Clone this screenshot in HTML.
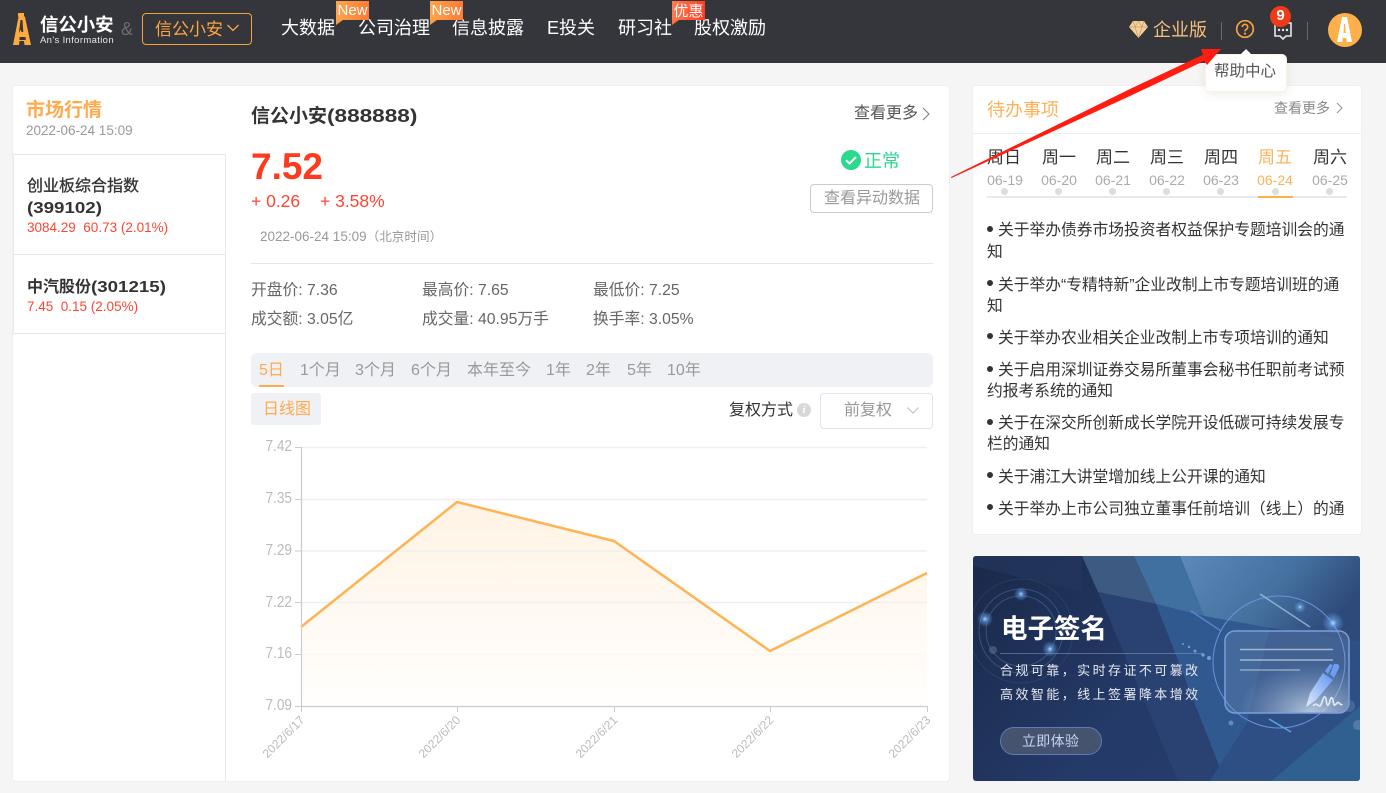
<!DOCTYPE html>
<html lang="zh-CN">
<head>
<meta charset="utf-8">
<title>信公小安</title>
<style>
*{box-sizing:border-box;margin:0;padding:0}
html,body{width:1386px;height:793px;overflow:hidden;background:#f5f5f5}
body{position:relative;font-family:"Liberation Sans","Noto Sans CJK SC",sans-serif;color:#333}
.t{position:absolute;white-space:nowrap;line-height:20px}
.b{position:absolute}
.hd{position:absolute;left:0;top:0;width:1386px;height:63px;background:#34363b}
.nav{color:#fff;font-size:18px;top:18px}
.tag{position:absolute;top:1px;width:33px;height:19px;color:#fff;font-size:15px;line-height:19px;text-align:center;background:linear-gradient(90deg,#ffa64d,#ff7a35)}
.tag:after{content:"";position:absolute;left:0;top:19px;border-top:5px solid #ff9a48;border-right:7px solid transparent}
.tag.r{background:linear-gradient(90deg,#ff7b50,#ff3d20);line-height:21px}
.tag.r:after{border-top-color:#ff6e48}
.red{color:#ff4433}
.st{font-size:15.75px;color:#666}
.tab{font-size:16px;color:#999;top:361px}
.yl{font-size:15.5px;color:#bbb;width:40px;text-align:right;left:252px;transform-origin:right center;transform:scaleX(.88)}
.xl{font-size:12px;color:#bbb;transform:rotate(-45deg);transform-origin:right center;line-height:14px}
.wk{font-size:17px;color:#333;width:54px;text-align:center;top:148px}
.dt{font-size:14px;color:#aaa;width:54px;text-align:center;top:170px}
.dot{position:absolute;top:188px;width:7px;height:7px;border-radius:50%;background:#ddd}
.li{font-size:15.75px;color:#333;left:998px;line-height:22px}
.bu{position:absolute;left:987px;width:6px;height:6px;border-radius:50%;background:#333}
.sx{display:inline-block;transform:scaleX(1.17);transform-origin:left center}
</style>
</head>
<body>

<!-- header -->
<div class="hd"></div>
<svg class="b" style="left:12px;top:12px" width="22" height="34" viewBox="0 0 22 34">
  <path d="M6 1h6v3l1 1 6 28H12.500l-.5-4H7.500L7 33H1L6.500 5 6 4z" fill="#ffaa3f"/>
  <path d="M8.500 8h2l.8 12H9.500l-.5-2-1 .8-.6 1.700H7z" fill="#34363b"/>
  <path d="M7.500 25h6l.3 3H7.500z" fill="#34363b"/>
</svg>
<div class="t" style="left:40px;top:15px;font-size:18.400px;font-weight:700;color:#fff;">信公小安</div>
<div class="t" style="left:40px;top:31px;font-size:9.500px;color:#e8e8e8;letter-spacing:.35px">An's Information</div>
<div class="t" style="left:121px;top:19px;font-size:18px;color:#6c6e72">&amp;</div>
<div class="b" style="left:142px;top:13px;width:110px;height:32px;border:1px solid #f2a33a;border-radius:4px"></div>
<div class="t" style="left:155px;top:20px;font-size:17px;color:#ffa640">信公小安</div>
<svg class="b" style="left:226px;top:23px" width="14" height="10" viewBox="0 0 14 10"><path d="M1.500 2l5.500 5.500L12.500 2" fill="none" stroke="#ffa640" stroke-width="1.300"/></svg>

<div class="t nav" style="left:281px">大数据</div>
<div class="t nav" style="left:358px">公司治理</div>
<div class="t nav" style="left:452px">信息披露</div>
<div class="t nav" style="left:547px">E投关</div>
<div class="t nav" style="left:618px">研习社</div>
<div class="t nav" style="left:694px">股权激励</div>
<div class="tag" style="left:336px">New</div>
<div class="tag" style="left:430px">New</div>
<div class="tag r" style="left:672px">优惠</div>

<svg class="b" style="left:1128px;top:20px" width="21" height="19" viewBox="0 0 21 19">
  <path d="M5 1h11l4 6-9.500 11L1 7z" fill="#f6cf9a"/>
  <path d="M1 7h19M7 7l3.500 11L14 7M5 1l2 6 3.500-6 3.500 6 2-6" fill="none" stroke="#b08a5c" stroke-width=".5"/>
</svg>
<div class="t" style="left:1153px;top:20px;font-size:18px;color:#f6bd7b">企业版</div>
<div class="b" style="left:1221px;top:22px;width:1px;height:18px;background:#66686c"></div>
<svg class="b" style="left:1235px;top:19px" width="20" height="20" viewBox="0 0 20 20">
  <circle cx="10" cy="10" r="8.300" fill="none" stroke="#f6a23d" stroke-width="1.700"/>
  <path d="M7.300 8a2.700 2.700 0 1 1 4.100 2.300c-1 .6-1.400 1-1.400 2.100" fill="none" stroke="#f6a23d" stroke-width="1.600"/>
  <circle cx="10" cy="14.600" r="1.100" fill="#f6a23d"/>
</svg>
<svg class="b" style="left:1272px;top:20px" width="22" height="20" viewBox="0 0 22 20">
  <path d="M3 3h16v13h-5l-3 3-3-3H3z" fill="none" stroke="#e8e8e8" stroke-width="1.600"/>
  <circle cx="7" cy="10" r="1.200" fill="#e8e8e8"/><circle cx="11" cy="10" r="1.200" fill="#e8e8e8"/><circle cx="15" cy="10" r="1.200" fill="#e8e8e8"/>
</svg>
<div class="b" style="left:1270px;top:6px;width:21px;height:21px;border-radius:50%;background:#f03a17;color:#fff;text-align:center;font-size:15px;font-weight:700;line-height:20px">9</div>
<div class="b" style="left:1307px;top:22px;width:1px;height:18px;background:#66686c"></div>
<svg class="b" style="left:1328px;top:13px" width="34" height="34" viewBox="0 0 34 34">
  <circle cx="17" cy="17" r="17" fill="#ffb04a"/>
  <path d="M14 4h5l5 25H9z" fill="#fff"/>
  <path d="M16 11h1.200l.5 9h-2.200z" fill="#ffb04a"/>
  <path d="M14.500 25h4v4h-4z" fill="#ffb04a"/>
</svg>

<!-- left main card -->
<div class="b" style="left:12px;top:85px;width:938px;height:697px;background:#fff;border:1px solid #f0f0f4;border-radius:4px"></div>
<div class="t" style="left:26px;top:101px;font-size:19px;font-weight:700;color:#ffaa4d">市场行情</div>
<div class="t" style="left:26px;top:121px;font-size:13.500px;color:#999">2022-06-24 15:09</div>
<div class="b" style="left:13px;top:154px;width:213px;height:1px;background:#e6e6e6"></div>
<div class="b" style="left:13px;top:254px;width:213px;height:1px;background:#e6e6e6"></div>
<div class="b" style="left:13px;top:333px;width:213px;height:1px;background:#e6e6e6"></div>
<div class="b" style="left:225px;top:154px;width:1px;height:627px;background:#e9e9e9"></div>
<div class="b" style="left:13px;top:154px;width:1px;height:180px;background:#e9e9e9"></div>

<div class="t" style="left:27px;top:177px;font-size:16px;color:#333;-webkit-text-stroke:.3px #333">创业板综合指数</div>
<div class="t" style="left:27px;top:199px;font-size:16px;font-weight:700;color:#333"><span class="sx">(399102)</span></div>
<div class="t red" style="left:27px;top:218px;font-size:13.500px">3084.29&nbsp; 60.73 (2.01%)</div>
<div class="t" style="left:27px;top:278px;font-size:16px;font-weight:700;color:#333">中汽股份<span class="sx">(301215)</span></div>
<div class="t red" style="left:27px;top:297px;font-size:13.500px">7.45&nbsp; 0.15 (2.05%)</div>

<div class="t" style="left:251px;top:106px;font-size:19px;font-weight:700;color:#333">信公小安<span class="sx" style="font-size:18.500px;transform:scaleX(1.22)">(888888)</span></div>
<div class="t" style="left:854px;top:104px;font-size:16px;color:#555">查看更多</div>
<svg class="b" style="left:921px;top:107px" width="10" height="14" viewBox="0 0 10 14"><path d="M2 1l6 6-6 6" fill="none" stroke="#888" stroke-width="1.200"/></svg>
<div class="t" style="left:251px;top:147px;font-size:37px;font-weight:700;color:#ff3b1f;line-height:40px">7.52</div>
<div class="t red" style="left:251px;top:191px;font-size:17.500px">+ 0.26</div>
<div class="t red" style="left:320px;top:191px;font-size:17.500px">+ 3.58%</div>
<div class="t" style="left:260px;top:227px;font-size:13.500px;color:#999">2022-06-24 15:09<span style="font-size:12.600px">（北京时间）</span></div>
<svg class="b" style="left:841px;top:150px" width="20" height="20" viewBox="0 0 20 20"><circle cx="10" cy="10" r="10" fill="#2bd98c"/><path d="M5 10.300l3.500 3.200L15 7" fill="none" stroke="#fff" stroke-width="2"/></svg>
<div class="t" style="left:864px;top:151px;font-size:18px;color:#2bd98c">正常</div>
<div class="b" style="left:810px;top:184px;width:123px;height:29px;border:1px solid #ccc;border-radius:4px"></div>
<div class="t" style="left:824px;top:189px;font-size:16px;color:#999">查看异动数据</div>
<div class="b" style="left:251px;top:263px;width:682px;height:1px;background:#e6e6e6"></div>

<div class="t st" style="left:251px;top:281px">开盘价: 7.36</div>
<div class="t st" style="left:422px;top:281px">最高价: 7.65</div>
<div class="t st" style="left:593px;top:281px">最低价: 7.25</div>
<div class="t st" style="left:251px;top:310px">成交额: 3.05亿</div>
<div class="t st" style="left:422px;top:310px">成交量: 40.95万手</div>
<div class="t st" style="left:593px;top:310px">换手率: 3.05%</div>

<div class="b" style="left:251px;top:353px;width:682px;height:34px;background:#f0f1f5;border-radius:6px"></div>
<div class="t tab" style="left:259px;color:#ffaa4d">5日</div>
<div class="b" style="left:259px;top:385px;width:25px;height:2px;background:#ffaa4d"></div>
<div class="t tab" style="left:300px">1个月</div>
<div class="t tab" style="left:355px">3个月</div>
<div class="t tab" style="left:411px">6个月</div>
<div class="t tab" style="left:467px">本年至今</div>
<div class="t tab" style="left:546px">1年</div>
<div class="t tab" style="left:586px">2年</div>
<div class="t tab" style="left:627px">5年</div>
<div class="t tab" style="left:667px">10年</div>

<div class="b" style="left:251px;top:393px;width:70px;height:32px;background:#f0f1f5;border-radius:3px"></div>
<div class="t" style="left:263px;top:400px;font-size:16px;color:#ffaa4d">日线图</div>
<div class="t" style="left:729px;top:401px;font-size:16px;color:#333">复权方式</div>
<div class="b" style="left:797px;top:403px;width:14px;height:14px;border-radius:50%;background:#d8d8d8;color:#fff;font:italic 700 11px/14px 'Liberation Serif',serif;text-align:center">i</div>
<div class="b" style="left:820px;top:393px;width:113px;height:36px;border:1px solid #e2e3ea;border-radius:4px"></div>
<div class="t" style="left:844px;top:401px;font-size:16px;color:#999">前复权</div>
<svg class="b" style="left:906px;top:406px" width="14" height="10" viewBox="0 0 14 10"><path d="M1.500 1.500L7 7l5.500-5.500" fill="none" stroke="#c4c4c4" stroke-width="1.200"/></svg>

<!-- chart -->
<svg class="b" style="left:250px;top:436px" width="690" height="344" viewBox="250 436 690 344">
  <defs>
    <linearGradient id="ar" x1="0" y1="502" x2="0" y2="706" gradientUnits="userSpaceOnUse">
      <stop offset="0" stop-color="#ffb04a" stop-opacity=".15"/>
      <stop offset="1" stop-color="#ffb04a" stop-opacity=".01"/>
    </linearGradient>
  </defs>
  <path d="M301 627L457 502L614 541L770 651L927 573V706H301Z" fill="url(#ar)"/>
  <g stroke="#efefef" stroke-width="1.500">
    <path d="M301 447.500H927M301 499.500H927M301 551H927M301 602.500H927"/>
  </g>
  <path d="M301 654.500H927" stroke="#fbf6f0" stroke-width="1.500"/>
  <path d="M301 627L457 502L614 541L770 651L927 573" fill="none" stroke="#ffb353" stroke-width="2.500" stroke-linejoin="round"/>
  <path d="M301.500 447V706.500H927.500" fill="none" stroke="#ccc" stroke-width="1.200"/>
  <path d="M295 447.500h6M295 499.500h6M295 551h6M295 602.500h6M295 654.500h6M295 706.500h6M301.500 706v6M457.500 706v6M614.500 706v6M770.500 706v6M927.500 706v6" stroke="#ccc" stroke-width="1"/>
</svg>
<div class="t yl" style="top:437px">7.42</div>
<div class="t yl" style="top:489px">7.35</div>
<div class="t yl" style="top:541px">7.29</div>
<div class="t yl" style="top:593px">7.22</div>
<div class="t yl" style="top:644px">7.16</div>
<div class="t yl" style="top:696px">7.09</div>
<div class="t xl" style="right:1084px;top:711px">2022/6/17</div>
<div class="t xl" style="right:928px;top:711px">2022/6/20</div>
<div class="t xl" style="right:771px;top:711px">2022/6/21</div>
<div class="t xl" style="right:615px;top:711px">2022/6/22</div>
<div class="t xl" style="right:458px;top:711px">2022/6/23</div>

<!-- right todo card -->
<div class="b" style="left:972px;top:85px;width:390px;height:450px;background:#fff;border:1px solid #f0f0f4;border-radius:4px"></div>
<div class="b" style="left:973px;top:133px;width:388px;height:1px;background:#eceef5"></div>
<div class="t" style="left:987px;top:100px;font-size:18px;color:#ffb05a">待办事项</div>
<div class="t" style="left:1274px;top:98px;font-size:14px;color:#888">查看更多</div>
<svg class="b" style="left:1335px;top:102px" width="9" height="12" viewBox="0 0 9 12"><path d="M2 1l5 5-5 5" fill="none" stroke="#999" stroke-width="1.100"/></svg>

<div class="t wk" style="left:977px">周日</div>
<div class="t wk" style="left:1032px">周一</div>
<div class="t wk" style="left:1086px">周二</div>
<div class="t wk" style="left:1140px">周三</div>
<div class="t wk" style="left:1194px">周四</div>
<div class="t wk" style="left:1248px;color:#ffb05a">周五</div>
<div class="t wk" style="left:1303px">周六</div>
<div class="t dt" style="left:978px">06-19</div>
<div class="t dt" style="left:1032px">06-20</div>
<div class="t dt" style="left:1086px">06-21</div>
<div class="t dt" style="left:1140px">06-22</div>
<div class="t dt" style="left:1194px">06-23</div>
<div class="t dt" style="left:1248px;color:#ffb05a">06-24</div>
<div class="t dt" style="left:1303px">06-25</div>
<div class="b" style="left:987px;top:196px;width:360px;height:2px;background:#e8e8ee"></div>
<div class="b" style="left:1258px;top:196px;width:35px;height:2px;background:#ffb04a"></div>
<div class="dot" style="left:1001px"></div>
<div class="dot" style="left:1055px"></div>
<div class="dot" style="left:1109px"></div>
<div class="dot" style="left:1163px"></div>
<div class="dot" style="left:1217px"></div>
<div class="dot" style="left:1272px"></div>
<div class="dot" style="left:1326px"></div>

<div class="bu" style="top:226px"></div>
<div class="t li" style="top:220px">关于举办债券市场投资者权益保护专题培训会的通</div>
<div class="t li" style="left:987px;top:242px">知</div>
<div class="bu" style="top:280px"></div>
<div class="t li" style="top:275px">关于举办“专精特新”企业改制上市专题培训班的通</div>
<div class="t li" style="left:987px;top:296px">知</div>
<div class="bu" style="top:333px"></div>
<div class="t li" style="top:328px">关于举办农业相关企业改制上市专项培训的通知</div>
<div class="bu" style="top:366px"></div>
<div class="t li" style="top:360px">关于启用深圳证券交易所董事会秘书任职前考试预</div>
<div class="t li" style="left:987px;top:381px">约报考系统的通知</div>
<div class="bu" style="top:419px"></div>
<div class="t li" style="top:413px">关于在深交所创新成长学院开设低碳可持续发展专</div>
<div class="t li" style="left:987px;top:434px">栏的通知</div>
<div class="bu" style="top:472px"></div>
<div class="t li" style="top:467px">关于浦江大讲堂增加线上公开课的通知</div>
<div class="bu" style="top:504px"></div>
<div class="t li" style="top:499px">关于举办上市公司独立董事任前培训（线上）的通</div>

<!-- banner -->
<svg class="b" style="left:973px;top:556px;border-radius:3px" width="387" height="225" viewBox="0 0 387 225">
  <defs>
    <linearGradient id="bg" x1="0" y1="0" x2="1" y2=".5">
      <stop offset="0" stop-color="#1a2949"/><stop offset=".6" stop-color="#243a68"/><stop offset="1" stop-color="#263c6c"/>
    </linearGradient>
    <linearGradient id="s1" x1="0" y1="0" x2="1" y2=".4">
      <stop offset="0" stop-color="#5d89ba"/><stop offset=".6" stop-color="#44709f"/><stop offset="1" stop-color="#2e4a7a"/>
    </linearGradient>
    <radialGradient id="gl"><stop offset="0" stop-color="#b9dcff"/><stop offset=".35" stop-color="#6aa6f0" stop-opacity=".6"/><stop offset="1" stop-color="#6aa6f0" stop-opacity="0"/></radialGradient>
    <radialGradient id="wh" cx=".7" cy="1" r=".6"><stop offset="0" stop-color="#cfdcee" stop-opacity=".85"/><stop offset="1" stop-color="#7f9cc4" stop-opacity=".25"/></radialGradient>
    <linearGradient id="pn" x1="1" y1="0" x2="0" y2="1"><stop offset="0" stop-color="#5e95f5"/><stop offset="1" stop-color="#e2ecfb"/></linearGradient>
  </defs>
  <rect width="387" height="225" fill="url(#bg)"/>
  <path d="M0 10L109 36V0H0Z" fill="#24365c" opacity=".7"/>
  <path d="M109 0H161L183 48L125 36Z" fill="#3d5a82"/>
  <path d="M125 36L183 48L252 225H205Z" fill="#2a4272"/>
  <path d="M183 48L231 60L297 72L274 167L237 225H252Z" fill="#30598f"/>
  <path d="M161 0H207L231 60L183 48Z" fill="#40709f"/>
  <path d="M207 0H387V85L297 72L231 60Z" fill="url(#s1)"/>
  <path d="M297 72L387 85V150L298 225H237L274 167Z" fill="#2d4f84"/>
  <path d="M298 225L387 150V225Z" fill="#30608f"/>
  <g fill="none" stroke="#6c93d8" stroke-opacity=".35">
    <circle cx="48" cy="75" r="35"/><circle cx="48" cy="75" r="42"/><circle cx="48" cy="75" r="52" stroke-opacity=".15"/>
  </g>
  <circle cx="48" cy="38" r="7" fill="url(#gl)"/>
  <circle cx="12" cy="63" r="8" fill="url(#gl)"/>
  <circle cx="77" cy="93" r="8" fill="url(#gl)"/>
  <circle cx="20" cy="94" r="4" fill="#5a6c8c" opacity=".6"/>
  <path d="M27 97.500H230" stroke="#8c9cbc" stroke-opacity=".7" stroke-width=".8"/>
  <circle cx="306" cy="106" r="66" fill="none" stroke="#6f90e0" stroke-width="1"/>
  <path d="M287 38l50 33" stroke="#9fc0e0" stroke-opacity=".8" stroke-width="1.500"/>
  <path d="M218 55l30 20" stroke="#6f90e0" stroke-opacity=".7" stroke-width="1.500"/>
  <path d="M296 163l22 13" stroke="#58a6e8" stroke-width="1.500"/>
  <rect x="252" y="75" width="124" height="82" rx="10" fill="url(#wh)" stroke="#7d9ddc" stroke-width="1.500"/>
  <path d="M267 93.500h93M267 104h93" stroke="#c4d2e2" stroke-opacity=".75" stroke-width="1.500"/>
  <path d="M267 114h60" stroke="#c4d2e2" stroke-opacity=".6" stroke-width="1.500"/>
  <path d="M333 151L337 137L350 117L360 124L343 144Z" fill="url(#pn)"/>
  <path d="M352 115L357 108L360 109L355 118ZM357 118L361 108C365 107 367 109 366 112L361 122Z" fill="#6d9cf0"/>
  <path d="M340 150c3-4 5 0 7 0 2-1 3-10 5-9s1 9 3 8 2-9 4-7 1 8 3 7 2-4 4-2 3 2 3 1" fill="none" stroke="#dce8f8" stroke-width="1.700"/>
  <circle cx="360" cy="67" r="11" fill="url(#gl)"/>
  <circle cx="327" cy="51" r="6" fill="url(#gl)"/>
  <circle cx="258" cy="167" r="2.500" fill="#7f9cc4" opacity=".7"/>
  <circle cx="376" cy="150" r="6" fill="#7f9cc4" opacity=".3"/>
  <circle cx="385" cy="169" r="5" fill="#7f9cc4" opacity=".45"/>
  <g fill="#6f9be0"><circle cx="210" cy="88" r="1"/><circle cx="216" cy="91" r="1.200"/><circle cx="222" cy="95" r="1.500"/><circle cx="230" cy="99" r="1.700"/><circle cx="236" cy="102" r="2"/></g>
  <rect x="27.500" y="171.500" width="101" height="27" rx="13.500" fill="#45536f" stroke="#5f7ab8"/>
</svg>
<div class="t" style="left:1001px;top:614px;font-size:26.500px;font-weight:700;color:#fff;line-height:30px">电子签名</div>
<div class="t" style="left:1000px;top:661px;font-size:13px;color:#e6e8f0;letter-spacing:2.430px">合规可靠，实时存证不可篡改</div>
<div class="t" style="left:1000px;top:685px;font-size:13px;color:#e6e8f0;letter-spacing:2.430px">高效智能，线上签署降本增效</div>
<div class="t" style="left:1022px;top:731px;font-size:14px;color:#c5d6f2;letter-spacing:.3px">立即体验</div>

<!-- tooltip -->
<div class="b" style="left:1205px;top:54px;width:82px;height:38px;background:#fff;border:1px solid #fdf0dd;border-radius:5px;box-shadow:0 3px 10px rgba(0,0,0,.07)"></div>
<div class="b" style="left:1240px;top:49px;width:0;height:0;border-left:6px solid transparent;border-right:6px solid transparent;border-bottom:6px solid #fff"></div>
<div class="t" style="left:1214px;top:62px;font-size:15.500px;color:#555">帮助中心</div>

<!-- arrow -->
<svg class="b" style="left:945px;top:40px" width="285" height="145" viewBox="945 40 285 145">
  <path d="M951 177L1130 89L1203 54.700L1201 49L1221 49L1207 65L1204 61L1130 96L951.500 178Z" fill="#ff1c10"/>
</svg>

</body>
</html>
